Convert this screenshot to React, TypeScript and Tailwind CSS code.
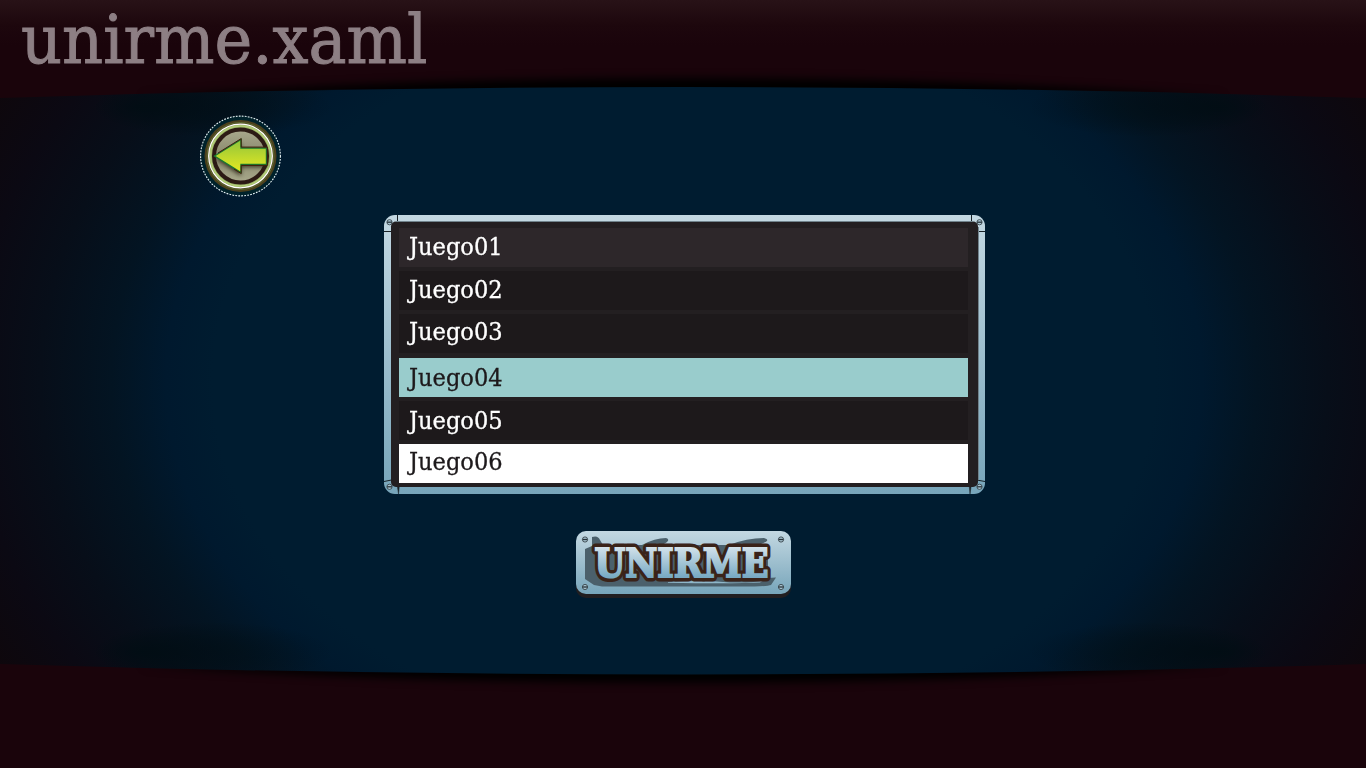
import React from "react";

const games = [
  { name: "Juego01", row: "bg-[#2d272a] text-white mb-1", shift: "pt-[4px]" },
  { name: "Juego02", row: "bg-[#1d191b] text-white mb-1", shift: "pt-[4px]" },
  { name: "Juego03", row: "bg-[#1d191b] text-white mb-[5px]", shift: "pt-[3px]" },
  { name: "Juego04", row: "bg-[#99cccc] text-[#1d191b] mb-1", shift: "pt-[5px]" },
  { name: "Juego05", row: "bg-[#1d191b] text-white mb-1", shift: "pt-[5px]" },
  { name: "Juego06", row: "bg-white text-[#1d191b]", shift: "pt-[3px]" },
];

function Backdrop() {
  return (
    <svg className="absolute inset-0" width="1366" height="768" viewBox="0 0 1366 768">
      <defs>
        <radialGradient id="glow" gradientUnits="userSpaceOnUse" cx="0" cy="0" r="1" gradientTransform="translate(684 380) scale(785 590)">
          <stop offset="0.6" stopColor="#001c30" />
          <stop offset="0.66" stopColor="#00192e" />
          <stop offset="0.73" stopColor="#031422" />
          <stop offset="0.82" stopColor="#070e19" />
          <stop offset="0.91" stopColor="#0b0913" />
          <stop offset="1" stopColor="#0e070c" />
        </radialGradient>
        <linearGradient id="top" x1="0" y1="0" x2="0" y2="1">
          <stop offset="0" stopColor="#281217" />
          <stop offset="0.25" stopColor="#1d070d" />
          <stop offset="0.45" stopColor="#1a040b" />
        </linearGradient>
        <radialGradient id="smudge" cx="0.5" cy="0.5" r="0.5" fx="0.2" fy="0.5">
          <stop offset="0" stopColor="#000d13" stopOpacity="0.8" />
          <stop offset="0.5" stopColor="#000d13" stopOpacity="0.45" />
          <stop offset="1" stopColor="#000d13" stopOpacity="0" />
        </radialGradient>
        <filter id="soft" x="-10%" y="-100%" width="120%" height="300%" colorInterpolationFilters="sRGB">
          <feGaussianBlur stdDeviation="4.5" />
        </filter>
        <clipPath id="stage">
          <path d="M0 98Q683 76 1366 98V664Q683 685 0 664Z" />
        </clipPath>
      </defs>
      <rect width="1366" height="768" fill="#1a040b" />
      <rect width="1366" height="100" fill="url(#top)" />
      <g filter="url(#soft)">
        <path d="M140 96Q683 60 1226 96Z" />
        <path d="M140 666Q683 700 1226 666Z" />
      </g>
      <g clipPath="url(#stage)">
        <rect width="1366" height="768" fill="url(#glow)" />
        <ellipse cx="213" cy="107" rx="120" ry="30" fill="url(#smudge)" />
        <ellipse cx="213" cy="107" rx="120" ry="30" fill="url(#smudge)" transform="translate(1361 0) scale(-1 1)" />
        <ellipse cx="213" cy="652" rx="120" ry="30" fill="url(#smudge)" />
        <ellipse cx="213" cy="652" rx="120" ry="30" fill="url(#smudge)" transform="translate(1361 0) scale(-1 1)" />
      </g>
    </svg>
  );
}

function BackIcon() {
  return (
    <svg width="82" height="82" viewBox="0 0 82 82">
      <defs>
        <linearGradient id="disc" x1="0" y1="0" x2="0" y2="1">
          <stop offset="0" stopColor="#aaa98d" />
          <stop offset="0.5" stopColor="#88886c" />
          <stop offset="1" stopColor="#a9a98c" />
        </linearGradient>
        <linearGradient id="arrow" x1="0" y1="0" x2="0" y2="1">
          <stop offset="0" stopColor="#8fc43b" />
          <stop offset="1" stopColor="#e9ea20" />
        </linearGradient>
        <filter id="arrowShade" x="-20%" y="-20%" width="140%" height="150%" colorInterpolationFilters="sRGB">
          <feGaussianBlur stdDeviation="2" />
        </filter>
      </defs>
      <circle cx="40.5" cy="41" r="39.9" fill="#00222b" stroke="#e6f3f5" strokeWidth="1.1" strokeDasharray="1.8 1.2" />
      <circle cx="40.5" cy="41" r="36" fill="#4c401c" />
      <circle cx="40.5" cy="41" r="33.5" fill="none" stroke="#5f6c34" strokeWidth="1" />
      <circle cx="40.5" cy="41" r="31.8" fill="#9aae65" stroke="#fff" strokeWidth="1.3" />
      <circle cx="40.5" cy="41" r="30" fill="none" stroke="#b4cf7b" strokeWidth="1.4" />
      <circle cx="40.5" cy="41" r="26.5" fill="url(#disc)" stroke="#2c1a14" strokeWidth="4" />
      <path d="M16 44L41 28V36H67V52H41V61Z" fill="#2c2417" opacity=".85" filter="url(#arrowShade)" />
      <path d="M14.5 41L41 24.5V33H66.5V49.5H41V57.5Z" fill="url(#arrow)" stroke="#1b7a30" strokeWidth="1.4" />
      <path d="M18 38L41.2 23.6V32.1H67.3V50.4H41.2V58.6L34 54" fill="none" stroke="#431d0b" strokeWidth="1" />
    </svg>
  );
}

function Screw({ x, y }: { x: number; y: number }) {
  return (
    <g transform={`translate(${x} ${y})`}>
      <circle r="2.6" fill="#a9c6d3" stroke="#38434a" strokeWidth="0.9" />
      <path d="M-2.4 0H2.4" stroke="#273238" strokeWidth="1.3" />
    </g>
  );
}

function Frame() {
  return (
    <svg className="absolute inset-0" width="601" height="279" viewBox="0 0 601 279">
      <defs>
        <linearGradient id="steel" x1="0" y1="0" x2="0" y2="1">
          <stop offset="0" stopColor="#c3d8e2" />
          <stop offset="1" stopColor="#77a5ba" />
        </linearGradient>
      </defs>
      <rect width="601" height="279" rx="11" fill="url(#steel)" />
      <Screw x={5.5} y={7.2} />
      <Screw x={595.5} y={7.2} />
      <Screw x={5.5} y={271.8} />
      <Screw x={595.5} y={271.8} />
      <path d="M13.5 0V10M0 16.5H10M587.5 0V10M601 16.5H590M0 266.5L10 264.5M601 266.5L590 264.5" stroke="#182126" />
      <path d="M13 269H15.5L14.5 279ZM585 269H587.5L586 279Z" fill="#182126" stroke="#182126" strokeWidth="0.5" />
      <rect x="7" y="6.5" width="587" height="265.5" rx="5" fill="#231f21" />
      <path d="M12 6.5H589M594.5 12V265" stroke="#71838c" />
    </svg>
  );
}

function JoinButton() {
  const label = {
    x: 18.5,
    y: 46,
    textLength: 174,
    lengthAdjust: "spacingAndGlyphs" as const,
    className: "font-['DejaVu_Serif',serif] text-[40px] font-bold",
  };
  return (
    <svg className="overflow-visible" width="215" height="67" viewBox="0 0 215 67">
      <defs>
        <linearGradient id="letters" gradientUnits="userSpaceOnUse" x1="0" y1="15" x2="0" y2="46">
          <stop offset="0" stopColor="#d6e4ec" />
          <stop offset="1" stopColor="#78aac3" />
        </linearGradient>
      </defs>
      <rect y="4" width="215" height="63" rx="10" fill="#211e20" />
      <rect width="215" height="63" rx="10" fill="url(#steel)" />
      <path d="M16 6Q22 4 24 9L27 14H66Q79 7 90 7Q96 9 86 14H153Q171 7 188 7Q196 9 185 13L192 16V47L200 46.5L195 54Q190 56 151 55.5H26L18 54L9 48V18L16 15Z" fill="#4b606b" />
      <path d="M92 51Q125 49 154 51.5Q184 52 190 48L184 51.5Q158 53 92 51.8Z" fill="#8fb7c9" />
      <Screw x={9} y={8.5} />
      <Screw x={205} y={8.5} />
      <Screw x={9} y={56} />
      <Screw x={205} y={56} />
      <text {...label} fill="#3a2319" stroke="#3a2319" strokeWidth="9" strokeLinejoin="round">UNIRME</text>
      <text {...label} fill="url(#letters)" stroke="url(#letters)" strokeWidth="2">UNIRME</text>
    </svg>
  );
}

export default function App() {
  return (
    <main className="relative h-[768px] w-[1366px] overflow-hidden bg-[#1a040b] font-['DejaVu_Serif',serif]">
      <Backdrop />
      <div className="relative flex h-full flex-col items-center">
        <header className="h-[115px] w-full pl-[21px]">
          <h1 className="w-fit origin-left scale-x-[0.938] text-[68px] leading-[80px] text-[#8d7f84] [-webkit-text-stroke:1px_#8d7f84]">unirme.xaml</h1>
        </header>
        <div className="h-[100px] w-full pl-[200px]">
          <button aria-label="Volver" className="block">
            <BackIcon />
          </button>
        </div>
        <section className="relative ml-[3px] h-[279px] w-[601px] pt-[13px] pr-[17px] pl-[15px]">
          <Frame />
          <ul className="relative">
            {games.map((g) => (
              <li key={g.name} className={`h-[39px] pl-[10px] ${g.row}`}>
                <span className={`block w-fit origin-left scale-x-[0.94] text-[24px] leading-[30px] [-webkit-text-stroke:0.3px] ${g.shift}`}>{g.name}</span>
              </li>
            ))}
          </ul>
        </section>
        <button aria-label="Unirme" className="mt-[37px] ml-px block">
          <JoinButton />
        </button>
      </div>
    </main>
  );
}
